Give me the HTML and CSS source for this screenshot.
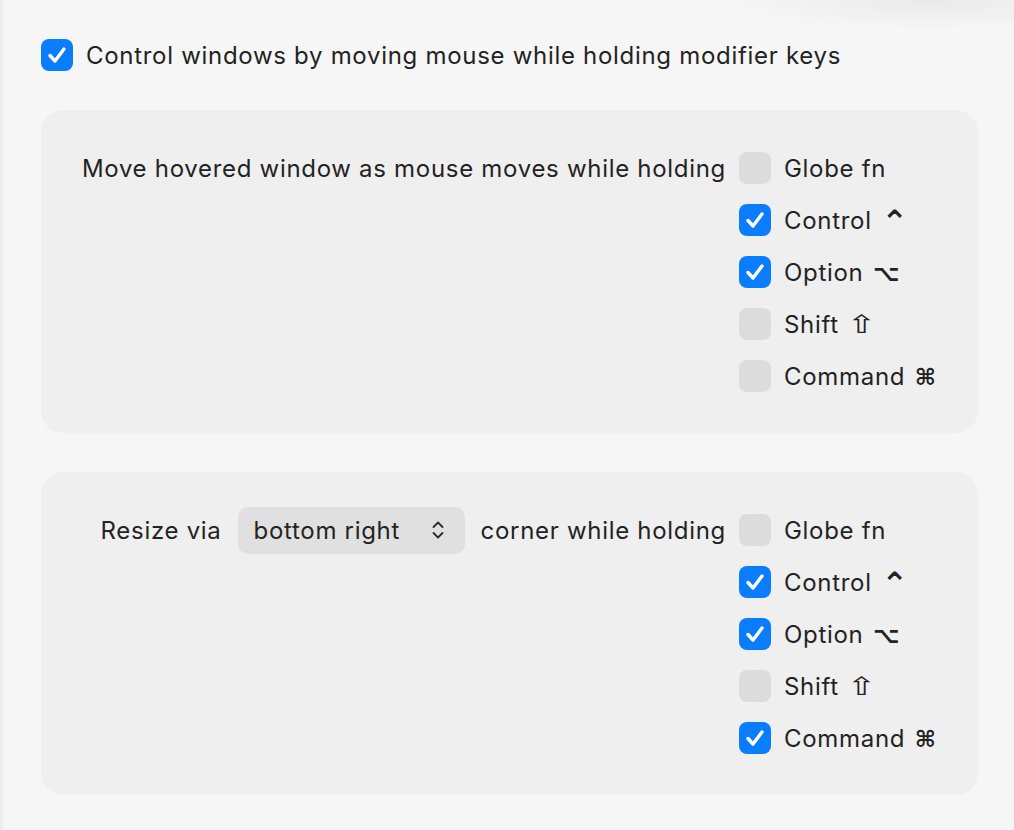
FILE: index.html
```html
<!DOCTYPE html>
<html lang="en">

<head>
    <meta charset="UTF-8">
    <title>Modifier keys</title>
    <link rel="stylesheet" href="styles.css">
</head>

<body>
    <div class="page">
        <div class="title-row">
            <span class="box on">
                <svg viewBox="0 0 32 32"><path d="M9 16.5l5 5.5 9-12" /></svg>
            </span>
            <span class="title">Control windows by moving mouse while holding modifier keys</span>
        </div>

        <div class="panel">
            <div class="lead">
                <span>Move hovered window as mouse moves while holding</span>
            </div>
            <div class="keys">
                <div class="key"><span class="box"></span><span>Globe fn</span></div>
                <div class="key"><span class="box on"><svg viewBox="0 0 32 32"><path d="M9 16.5l5 5.5 9-12" /></svg></span><span>Control <span class="sym ctrl">⌃</span></span></div>
                <div class="key"><span class="box on"><svg viewBox="0 0 32 32"><path d="M9 16.5l5 5.5 9-12" /></svg></span><span>Option <span class="sym">⌥</span></span></div>
                <div class="key"><span class="box"></span><span>Shift <span class="sym shift">⇧</span></span></div>
                <div class="key"><span class="box"></span><span>Command <span class="sym">⌘</span></span></div>
            </div>
        </div>

        <div class="panel">
            <div class="lead">
                <span>Resize via</span>
                <div class="select">
                    <span>bottom right</span>
                    <svg viewBox="0 0 14 24"><path d="M2.5 9l4.5-4.5 4.5 4.5M2.5 15l4.5 4.5 4.5-4.5" /></svg>
                </div>
                <span>corner while holding</span>
            </div>
            <div class="keys">
                <div class="key"><span class="box"></span><span>Globe fn</span></div>
                <div class="key"><span class="box on"><svg viewBox="0 0 32 32"><path d="M9 16.5l5 5.5 9-12" /></svg></span><span>Control <span class="sym ctrl">⌃</span></span></div>
                <div class="key"><span class="box on"><svg viewBox="0 0 32 32"><path d="M9 16.5l5 5.5 9-12" /></svg></span><span>Option <span class="sym">⌥</span></span></div>
                <div class="key"><span class="box"></span><span>Shift <span class="sym shift">⇧</span></span></div>
                <div class="key"><span class="box on"><svg viewBox="0 0 32 32"><path d="M9 16.5l5 5.5 9-12" /></svg></span><span>Command <span class="sym">⌘</span></span></div>
            </div>
        </div>
    </div>
</body>

</html>
```

FILE: styles.css
```css
html,
body {
    margin: 0;
    height: 100%;
}

body {
    font-family: Inter, "Liberation Sans", sans-serif;
    font-size: 24px;
    letter-spacing: 0.7px;
    color: #232323;
    background-color: #f6f6f6;
    background-image: radial-gradient(ellipse 200px 30px at 930px 0, rgba(0, 0, 0, 0.05), rgba(0, 0, 0, 0));
    border-left: 3px solid #ececec;
    box-sizing: border-box;
}

.page {
    padding: 39px 36px 0 38px;
}

.title-row {
    display: flex;
    align-items: center;
    gap: 13px;
    height: 32px;
}

.box {
    flex: none;
    width: 32px;
    height: 32px;
    border-radius: 8px;
    background-color: #dcdcdc;
    display: flex;
    align-items: center;
    justify-content: center;
}

.box.on {
    background-color: #0a7cfe;
}

.box svg {
    width: 32px;
    height: 32px;
    fill: none;
    stroke: #fff;
    stroke-width: 3.4;
    stroke-linecap: round;
    stroke-linejoin: round;
}

.panel {
    margin-top: 39px;
    background-color: #efefef;
    border-radius: 22px;
    display: flex;
    padding: 42px 39px 41px 40px;
    gap: 13px;
}

.lead {
    flex: 1;
    height: 32px;
    display: flex;
    align-items: center;
    justify-content: flex-end;
    gap: 16px;
    white-space: nowrap;
}

.select {
    height: 47px;
    width: 227px;
    box-sizing: border-box;
    padding: 0 20px 0 16px;
    border-radius: 10px;
    background-color: #e0e0e0;
    display: flex;
    align-items: center;
    justify-content: space-between;
}

.select svg {
    width: 14px;
    height: 24px;
    fill: none;
    stroke: #2a2a2a;
    stroke-width: 1.8;
    stroke-linecap: round;
    stroke-linejoin: round;
}

.keys {
    width: 200px;
    display: flex;
    flex-direction: column;
    gap: 20px;
}

.key {
    display: flex;
    align-items: center;
    gap: 13px;
    height: 32px;
    white-space: pre;
}

.sym {
    display: inline-block;
    font-family: "DejaVu Sans", sans-serif;
    font-weight: bold;
    font-size: 23px;
    letter-spacing: 0;
    margin-left: 2px;
}

.sym.ctrl {
    font-size: 32px;
    line-height: 24px;
    vertical-align: -4px;
}

.sym.shift {
    font-weight: normal;
    font-size: 25px;
    transform: scaleX(1.45);
    margin-left: 5px;
}
```
